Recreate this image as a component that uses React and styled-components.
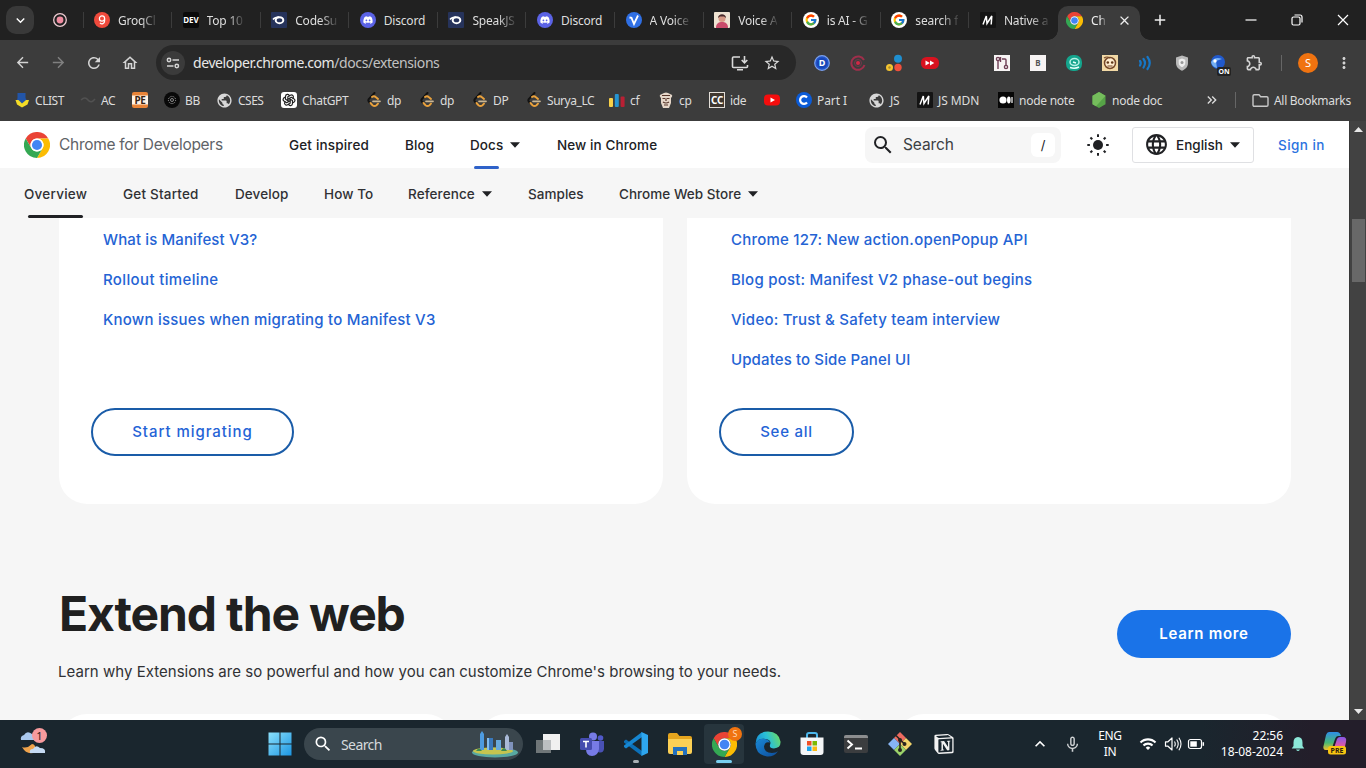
import React from "react";
import styled, { createGlobalStyle } from "styled-components";
import {
  MdArrowBack, MdArrowForward, MdRefresh, MdOutlineHome, MdStarBorder, MdMoreVert,
  MdOutlineExtension, MdSearch, MdLanguage, MdPublic, MdClose, MdAdd, MdKeyboardArrowDown,
  MdKeyboardArrowUp, MdKeyboardDoubleArrowRight, MdMicNone, MdWifi,
} from "react-icons/md";
import { SiDiscord, SiNotion } from "react-icons/si";
import { TbBrandOpenai } from "react-icons/tb";
import { FcGoogle } from "react-icons/fc";

const ui = `"Noto Sans", "Open Sans", sans-serif`;
const brand = `Inter, Roboto, sans-serif`;

const Global = createGlobalStyle`
  * { box-sizing: border-box; }
  body { margin: 0; overflow: hidden; background: #f6f6f6; }
  svg { display: block; flex: none; }
`;

/* ---------- shell ---------- */
const Screen = styled.div`
  width: 1366px; height: 768px; display: flex; flex-direction: column;
  overflow: hidden; font-family: ${ui};
`;

/* ---------- tab strip ---------- */
const TabStrip = styled.div`
  height: 40px; flex: none; display: flex; align-items: center; background: #212121; color: #dedede;
`;
const TabSearch = styled.div`
  width: 28px; height: 28px; margin: 0 9px 0 6px; border-radius: 10px; background: #393939;
  display: grid; place-items: center;
`;
const Tab = styled.div`
  position: relative; width: ${(p) => p.$w || 88.6}px; height: 40px; flex: none;
  display: flex; align-items: center; gap: 8px; padding-left: ${(p) => p.$pad || 10.5}px;
  &::after {
    content: ""; position: absolute; right: 0; top: 12px; width: 1px; height: 16px;
    background: ${(p) => (p.$last ? "transparent" : "#3c3c3c")};
  }
`;
const TabTitle = styled.span`
  white-space: nowrap; font-size: 12px; letter-spacing: -0.2px; line-height: 18px; padding-top: 1px;
  mask-image: ${(p) => (p.$full ? "none" : "linear-gradient(90deg, #000 60%, rgba(0,0,0,.15))")};
`;
const ActiveTab = styled.div`
  position: relative; width: 82px; height: 34px; margin-left: 0; align-self: flex-end; background: #3c3c3c;
  padding: 0 0 5px 8px; border-radius: 10px 10px 0 0; display: flex; align-items: center; color: #eee;
  &::before, &::after {
    content: ""; position: absolute; bottom: 0; width: 10px; height: 10px;
  }
  &::before { right: 100%; background: radial-gradient(circle at 0 0, transparent 9.5px, #3c3c3c 10px); }
  &::after { left: 100%; background: radial-gradient(circle at 100% 0, transparent 9.5px, #3c3c3c 10px); }
`;
const ActiveTitle = styled.div`
  width: 34px; padding-left: 8px; display: flex;
`;
const WindowButtons = styled.div`
  margin-left: auto; display: flex; align-items: center;
`;
const WindowButton = styled.div`
  width: 46px; height: 40px; display: grid; place-items: center; color: #fff;
`;

/* ---------- toolbar ---------- */
const Toolbar = styled.div`
  height: 45px; flex: none; display: flex; align-items: center; background: #3c3c3c;
  padding-left: 4px; color: #d4d4d4;
`;
const ToolCell = styled.div`
  position: relative; width: ${(p) => p.$w || 36}px; height: 36px; flex: none;
  display: grid; place-items: center; opacity: ${(p) => (p.$dim ? 0.45 : 1)};
`;
const UrlBar = styled.div`
  width: 640px; height: 35px; margin: 0 8px 0 8px; border-radius: 18px; background: #282828; flex: none;
  display: flex; align-items: center; padding-left: 5px; padding-right: 8px;
`;
const SiteInfo = styled.div`
  width: 24px; height: 24px; border-radius: 50%; background: #3b3b3b; display: grid; place-items: center;
`;
const Url = styled.div`
  flex: 1; margin-left: 8px; font-size: 14px; letter-spacing: -0.41px; color: #e8e8e8;
  span { color: #c2c2c2; }
`;
const UrlIcon = styled.div`
  width: 32px; display: grid; place-items: center;
`;
const Rule = styled.div`
  width: 1px; height: 16px; background: #666; flex: none;
`;
const Avatar = styled.div`
  width: 20px; height: 20px; border-radius: 50%; background: #f07310; color: #fff;
  font-size: 11px; display: grid; place-items: center;
`;
const OnBadge = styled.div`
  position: absolute; right: 5px; bottom: 5px; width: 14px; height: 9px; border-radius: 2px;
  background: #222; color: #fff; font-size: 7px; font-weight: 700; line-height: 9px; text-align: center;
`;

/* ---------- bookmarks ---------- */
const Bookmarks = styled.div`
  height: 36px; flex: none; display: flex; align-items: center; background: #3c3c3c;
  padding: 0 0 6px 14px; color: #dcdcdc;
`;
const Bookmark = styled.div`
  width: ${(p) => p.$w}px; flex: none; display: flex; align-items: center; gap: 5px;
  font-size: 12px; letter-spacing: ${(p) => (p.$ls === undefined ? -0.35 : p.$ls)}px; white-space: nowrap;
`;

/* ---------- page ---------- */
const Viewport = styled.div`
  flex: 1; display: flex; min-height: 0; background: #f6f6f6;
`;
const Page = styled.div`
  width: 1349px; display: flex; flex-direction: column; font-family: ${brand}; overflow: hidden;
`;
const Header = styled.header`
  height: 47px; flex: none; background: #fff; display: flex; align-items: center;
  padding-left: 24px; color: #202124;
`;
const Logo = styled.div`
  width: 265px; display: flex; align-items: center; gap: 9px; font-size: 15.5px;
  letter-spacing: -0.3px; color: #5f6368; white-space: nowrap;
`;
const NavItem = styled.div`
  position: relative; width: ${(p) => p.$w}px; height: 100%; flex: none;
  display: flex; align-items: center; gap: 7px; white-space: nowrap;
  font-size: 13.5px; font-weight: 450; letter-spacing: ${(p) => p.$ls || 0.1}px;
`;
const Underline = styled.div`
  position: absolute; left: 4px; bottom: ${(p) => p.$drop || 0}px; width: ${(p) => p.$w}px; height: 3px;
  border-radius: 3px; background: ${(p) => p.$color};
`;
const SearchBox = styled.div`
  width: 196px; height: 36px; margin-left: auto; background: #f6f6f6; border-radius: 8px;
  display: flex; align-items: center; padding: 0 6px; font-size: 15.5px; letter-spacing: -0.1px; color: #3c4043;
  span { flex: 1; margin-left: 8px; }
`;
const SlashKey = styled.div`
  width: 24px; height: 24px; border-radius: 6px; background: #fff; font-size: 13px; color: #202124;
  display: grid; place-items: center;
`;
const ThemeToggle = styled.div`
  width: 71px; padding-left: 3px; display: grid; place-items: center;
`;
const Language = styled.div`
  width: 122px; height: 36px; border: 1px solid #dfe0e3; border-radius: 3px; display: flex; align-items: center;
  padding-left: 11px; font-size: 13.5px; font-weight: 450; letter-spacing: 0; gap: 7px;
`;
const SignIn = styled.div`
  width: 95px; padding-left: 24px; font-size: 13.5px; font-weight: 500; letter-spacing: 0.45px; color: #2a72e0;
`;
const SubNav = styled.nav`
  height: 50px; flex: none; display: flex; align-items: center; padding: 1px 0 0 24px;
  background: #f6f6f6; color: #303134;
`;
const Cards = styled.div`
  height: 286px; flex: none; display: flex; gap: 24px; padding: 0 58px 0 59px;
`;
const Card = styled.section`
  flex: 1; background: #fff; border-radius: 0 0 28px 28px; padding: 2px 32px 0;
  display: flex; flex-direction: column; align-items: flex-start;
`;
const LinkList = styled.div`
  height: 188px; padding-left: 12px;
`;
const CardLink = styled.a`
  display: block; height: 40px; line-height: 40px; font-size: 15px; font-weight: 450;
  letter-spacing: ${(p) => p.$ls || 0.23}px; color: #2463d4; white-space: nowrap;
`;
const Outlined = styled.button`
  width: ${(p) => p.$w}px; height: 48px; border: 2px solid #1a5ca8; border-radius: 24px; background: #fff;
  color: #2463d6; font: 450 15px ${brand}; letter-spacing: ${(p) => p.$ls || 0.95}px; padding: 0 0 1px;
`;
const Intro = styled.section`
  height: 210px; flex: none; display: flex; align-items: flex-start; justify-content: space-between;
  padding: 82px 58px 0 58px; color: #202020;
`;
const Title = styled.h2`
  margin: 0; font-size: 48px; line-height: 56px; font-weight: 680; letter-spacing: -1.12px; padding-left: 1px;
`;
const Lead = styled.p`
  margin: 18px 0 0; font-size: 15px; line-height: 24px; letter-spacing: 0.03px; color: #303134; white-space: nowrap;
`;
const Filled = styled.button`
  width: 174px; height: 48px; margin-top: 24px; border: 0; border-radius: 24px; background: #1a73e8;
  color: #fff; font: 600 15px ${brand}; letter-spacing: 0.7px; padding: 0 0 1px;
`;
const NextCards = styled.div`
  flex: 1; display: flex; gap: 24px; padding: 0 58px 0 59px;
`;
const NextCard = styled.div`
  flex: 1; height: 60px; border-radius: 28px; background: #fff;
`;
const ScrollTrack = styled.div`
  width: 17px; background: #424242; display: flex; flex-direction: column; align-items: center;
  justify-content: space-between; padding: 6px 0 6px; border-left: 1px solid #383838;
`;
const ScrollThumb = styled.div`
  width: 13px; height: 63px; margin-bottom: 341px; background: #686868;
`;

/* ---------- taskbar ---------- */
const Taskbar = styled.div`
  height: 48px; flex: none; display: flex; align-items: center; color: #fff;
  background: linear-gradient(90deg, #1a262e 0, #1a262e 88%, #231e2a 96%, #231e2a 100%);
`;
const WeatherCell = styled.div`
  width: 257px; padding-left: 18px; padding-bottom: 5px;
`;
const TaskCell = styled.div`
  position: relative; width: ${(p) => p.$w || 44}px; height: 40px; flex: none; display: grid; place-items: center;
  ${(p) => p.$active && "&::before{content:'';position:absolute;inset:0 2px;border-radius:4px;background:#27353d;}"}
  svg { position: relative; }
`;
const RunMark = styled.div`
  position: absolute; left: 50%; bottom: 1px; width: ${(p) => p.$w}px; height: 3px; border-radius: 2px;
  transform: translateX(-50%); background: ${(p) => p.$color};
`;
const ProfileBadge = styled.div`
  position: absolute; right: 4px; top: 3px; width: 14px; height: 14px; border-radius: 50%;
  background: #f07310; color: #ffd9b5; font-size: 9px; line-height: 14px; text-align: center;
`;
const TaskSearch = styled.div`
  width: 219px; height: 32px; margin: 0 3px 0 2px; border-radius: 16px; background: #3a464d;
  display: flex; align-items: center; padding: 0 4px 0 9px; color: #d6dadd;
  font-size: 14px; letter-spacing: -0.6px;
  span { flex: 1; margin-left: 8px; }
`;
const Tray = styled.div`
  margin-left: auto; display: flex; align-items: center; height: 100%;
`;
const TwoLines = styled.div`
  width: ${(p) => p.$w}px; text-align: ${(p) => p.$align}; font-size: 12px; line-height: 16px;
  letter-spacing: ${(p) => p.$ls}px; white-space: nowrap;
`;
const Notice = styled.text`
  font: ${(p) => p.$size}px ${ui}; font-weight: ${(p) => p.$weight || 700}; text-anchor: middle;
`;

/* ---------- drawings ---------- */
const Svg = ({ s = 16, box = 16, children }) => (
  <svg width={s} height={s} viewBox={`0 0 ${box} ${box}`} fill="none">{children}</svg>
);
const ChromeLogo = ({ s = 16 }) => (
  <Svg s={s} box={48}>
    <path d="M24 12H44.8A24 24 0 0 0 3.2 12L13.6 30A12 12 0 0 1 24 12z" fill="#ea4335" />
    <path d="M44.8 12H24A12 12 0 0 1 34.4 30L24 48A24 24 0 0 0 44.8 12z" fill="#fbbc04" />
    <path d="M3.2 12A24 24 0 0 0 24 48L34.4 30A12 12 0 0 1 13.6 30z" fill="#34a853" />
    <circle cx="24" cy="24" r="12" fill="#fff" />
    <circle cx="24" cy="24" r="9.3" fill="#4285f4" />
  </Svg>
);
const Caret = () => <svg width="10" height="6" viewBox="0 0 10 6"><path d="M0 .3h10L5 5.8z" fill="#202124" /></svg>;
const Recorder = () => (
  <Svg><circle cx="8" cy="8" r="6.3" stroke="#eecbd2" strokeWidth="1.3" /><circle cx="8" cy="8" r="3.4" fill="#f08ca0" /></Svg>
);
const Groq = () => (
  <Svg><circle cx="8" cy="8" r="8" fill="#ef4a3c" /><circle cx="8" cy="6.5" r="2.6" stroke="#fff" strokeWidth="1.2" /><path d="M10.6 6.5v2.6a2.6 2.6 0 0 1-4.6 1.7" stroke="#fff" strokeWidth="1.2" /></Svg>
);
const Dev = () => (
  <Svg><rect width="16" height="16" rx="2" fill="#0a0a0a" /><Notice x="8" y="11.3" $size={8} fill="#fff">DEV</Notice></Svg>
);
const Loop = () => (
  <Svg><rect width="16" height="16" rx="1" fill="#26335b" /><path d="M2 7.500q2-2.500 6-2.500" stroke="#fff" strokeWidth="1.500" /><ellipse cx="8.500" cy="8.200" rx="3.800" ry="3" stroke="#fff" strokeWidth="2" /></Svg>
);
const DiscordIcon = () => (
  <Svg><circle cx="8" cy="8" r="8" fill="#5b63e6" /><SiDiscord x="3.2" y="3.2" size={9.6} color="#fff" /></Svg>
);
const VoiceV = () => (
  <Svg><circle cx="8" cy="8" r="8" fill="#2f6fe4" /><path d="M3.500 5.500l2 .3L8 12l4-8.500" stroke="#fff" strokeWidth="1.800" /></Svg>
);
const Portrait = () => (
  <Svg><rect width="16" height="16" rx="1" fill="#efe3d2" /><path d="M2 16c0-5 3-6 6-6s6 1 6 6z" fill="#c94b6a" /><circle cx="8" cy="6.500" r="3.500" fill="#d89a86" /><path d="M4 6c0-5 8-5 8 0l-2-1.500H6z" fill="#4a2a2a" /></Svg>
);
const GoogleTab = () => (
  <Svg><circle cx="8" cy="8" r="8" fill="#fff" /><FcGoogle x="1.500" y="1.500" size={13} /></Svg>
);
const Mdn = () => (
  <Svg><rect width="16" height="16" rx="1" fill="#141414" /><path d="M3 12.500L6.300 4l.7 7.500L11.800 4l-.6 8.500" stroke="#fff" strokeWidth="1.500" /></Svg>
);
const Tune = () => (
  <Svg s={14} box={14}><g stroke="#d5d5d5" strokeWidth="1.500"><circle cx="3" cy="4" r="1.700" /><path d="M6.500 4H13M1 10h6.500" /><circle cx="10.800" cy="10" r="1.700" /></g></Svg>
);
const Install = () => (
  <Svg s={18} box={18}><path d="M9 3H2.500Q1.500 3 1.500 4v8.500q0 1 1 1h13q1 0 1-1V11M6 15.800h6M13.500 2v6.500M10.700 6l2.800 2.800L16.300 6" stroke="#dadada" strokeWidth="1.600" /></Svg>
);
const DRing = () => (
  <Svg><circle cx="8" cy="8" r="7.300" fill="#2254c8" stroke="#7aa0ee" strokeWidth="1.200" /><circle cx="8" cy="8" r="5.200" fill="#1746b8" /><Notice x="8" y="11.200" $size={9} fill="#fff">D</Notice></Svg>
);
const RedRing = () => (
  <Svg><path d="M14 5A6.700 6.700 0 1 0 14.500 10" stroke="#9e2f4b" strokeWidth="2" /><circle cx="8" cy="8" r="3.500" stroke="#75364a" strokeWidth="1" /><circle cx="8" cy="8" r="2" fill="#d22846" /></Svg>
);
const Dots = () => (
  <Svg s={18} box={18}><circle cx="13" cy="4.800" r="4" fill="#1f8fd0" /><circle cx="4.500" cy="13.500" r="3.500" fill="#f4c430" /><circle cx="13" cy="13.500" r="3.700" fill="#f0503c" /><circle cx="4.500" cy="13.500" r="1.200" fill="#a8892c" /></Svg>
);
const RedSkip = () => (
  <Svg s={18} box={18}><rect y="3" width="18" height="12" rx="5.500" fill="#d8121f" /><path d="M4.500 6.500L8.800 9l-4.300 2.500zM9 6.500L13.300 9 9 11.500z" fill="#fff" /></Svg>
);
const WhiteTile = ({ children }) => <Svg><rect width="16" height="16" fill="#f7f4f4" />{children}</Svg>;
const PullTile = () => (
  <WhiteTile><g stroke="#6e3f55" strokeWidth="1.400"><circle cx="4" cy="4" r="1.600" /><circle cx="12" cy="12" r="1.600" /><path d="M4 6v8M8 4h3q1 0 1 1v5M6.500 2v5" /></g></WhiteTile>
);
const BTile = () => <WhiteTile><Notice x="8" y="11" $size={8} fill="#555">B</Notice></WhiteTile>;
const TealLens = () => (
  <Svg s={18} box={18}><rect x="1" y="1" width="16" height="16" rx="7" fill="#14a58d" /><ellipse cx="9.500" cy="8" rx="4.500" ry="3.500" stroke="#b5f1e5" strokeWidth="1.500" /><path d="M5 13.500q5 1.500 9-.500M8 8l3 1" stroke="#e6fffa" strokeWidth="1.500" /></Svg>
);
const Monkey = () => (
  <Svg><rect width="16" height="16" fill="#f2d9a6" /><circle cx="8" cy="8" r="5.500" fill="#ffedd0" stroke="#764829" strokeWidth="1.500" /><circle cx="5.800" cy="7.500" r="1.300" fill="#603718" /><circle cx="10.200" cy="7.500" r="1.300" fill="#603718" /><path d="M5.500 11h5M2 3q3-2 6 0" stroke="#764829" strokeWidth="1.200" /></Svg>
);
const Waves = () => (
  <Svg><path d="M2 6q1.500 2 0 4.500M5.500 4q3 4 0 8.500M9.500 2q4.500 6 0 12" stroke="#1677c8" strokeWidth="2.200" strokeLinecap="round" /></Svg>
);
const Shield = () => (
  <Svg><path d="M8 .5l6 2V8c0 4-3 6.500-6 7.800C5 14.500 2 12 2 8V2.500z" fill="#b9b9b9" /><path d="M8 3.500l3.300 1.200V8c0 2-1.500 3.500-3.300 4.300C6.200 11.500 4.700 10 4.700 8V4.700z" fill="#eee" /><circle cx="8" cy="7.500" r="1.500" fill="#999" /></Svg>
);
const BlueBall = () => (
  <Svg><circle cx="8" cy="7" r="7" fill="#2159cb" /><path d="M1 7q4-6 11-3L6 6l1 7Q2 12 1 7z" fill="#75b0f5" /><circle cx="5" cy="6" r="1.700" fill="#fff" /></Svg>
);
const Clist = () => (
  <Svg><path d="M3.500 1h8v5l1 2-4.500 4-5-4 .5-2z" fill="#2255a8" /><path d="M1.500 8l3 0 3.500 3.500L12 8l3 0-1.500 4.500L8 15.500l-5-3z" fill="#f4dc27" /></Svg>
);
const AcMark = () => <Svg><path d="M1 8q4-4 7 0t7-1" stroke="#515151" strokeWidth="1.500" /></Svg>;
const Pe = () => (
  <Svg><rect width="16" height="16" rx="2" fill="#e98438" /><rect x="0" y="3.500" width="16" height="9" fill="#fff3e6" /><Notice x="8" y="11.500" $size={10} fill="#3a2415">PE</Notice></Svg>
);
const Bb = () => (
  <Svg><circle cx="8" cy="8" r="8" fill="#090909" /><circle cx="8" cy="8" r="3.600" stroke="#aaa" strokeDasharray="1 1" /><circle cx="8" cy="8" r="1.500" stroke="#aaa" strokeWidth=".8" /></Svg>
);
const World = () => <MdPublic size={17} color="#d8d8d8" />;
const Gpt = () => <Svg><rect width="16" height="16" rx="3" fill="#fff" /><TbBrandOpenai x="1" y="1" size={14} color="#222" /></Svg>;
const Leet = () => (
  <Svg>
    <path d="M8.500 1L3 6.800q-1.300 1.500 0 3l1.200 1.200" stroke="#121212" strokeWidth="2" strokeLinecap="round" />
    <path d="M6 5q2-1.500 4 .3L12 7M4.500 11l2 2.200q2 1.600 4 0L12 11.600" stroke="#e9a13c" strokeWidth="1.900" strokeLinecap="round" />
    <path d="M7 9.300h7" stroke="#c9b694" strokeWidth="1.700" strokeLinecap="round" />
  </Svg>
);
const Cf = () => (
  <Svg><rect x="0" y="6" width="4" height="9" rx="1" fill="#f8d148" /><rect x="5.800" y="2" width="4" height="13" rx="1" fill="#2595d2" /><rect x="11.600" y="4.500" width="4" height="10.500" rx="1" fill="#b92034" /></Svg>
);
const Chef = () => (
  <Svg><path d="M3 6Q0 3 4 2q4-3 8 0 4 1 1 4v5l-2 5H5l-2-5z" fill="#e5d6c8" /><path d="M4.500 6.500h3M8.500 6.500h3M5 10q3 2 6 0M8 7v2M6 13h4M4 3.500h8" stroke="#57362a" strokeWidth="1.200" /></Svg>
);
const Cc = () => (
  <Svg><rect x=".5" y=".5" width="15" height="15" fill="#40372f" stroke="#e3ded8" /><Notice x="8" y="11.500" $size={10} fill="#fff">CC</Notice></Svg>
);
const Youtube = () => <Svg><rect y="2.500" width="16" height="11" rx="4" fill="#f50d0d" /><path d="M6.500 5.500L11 8l-4.500 2.500z" fill="#fff" /></Svg>;
const BlueC = () => <Svg><circle cx="8" cy="8" r="8" fill="#0b5bd7" /><path d="M11 5.500A3.900 3.900 0 1 0 11 10.500" stroke="#fff" strokeWidth="2.200" /></Svg>;
const Medium = () => <Svg><rect width="16" height="16" fill="#070707" /><circle cx="5" cy="8" r="3.600" fill="#fff" /><ellipse cx="10.800" cy="8" rx="1.800" ry="3.400" fill="#fff" /><path d="M14 5v6" stroke="#fff" strokeWidth="1.200" /></Svg>;
const NodeHex = () => <Svg><path d="M8 0l6.500 3.800v8.400L8 16l-6.500-3.800V3.800z" fill="#56a347" /><path d="M8 0l6.500 3.800L5 14.200 1.500 12.200V3.800z" fill="#75bd5c" /></Svg>;
const SunIcon = () => (
  <Svg s={24} box={24}>
    <circle cx="12" cy="12" r="5" fill="#202124" />
    {[0, 45, 90, 135, 180, 225, 270, 315].map((a) => (
      <path key={a} d="M12 1.300v2.600" stroke="#202124" strokeWidth="2" transform={`rotate(${a} 12 12)`} />
    ))}
  </Svg>
);
const Weather = () => (
  <Svg s={30} box={30}>
    <path d="M3 13q-1-4 3-5 3-5 8-1 6 0 5 6z" fill="#a9c8ee" />
    <path d="M4 20q5 2 10-3 4 0 4 8-9 4-14-5z" fill="#efa34c" />
    <path d="M12 26q-1-4 3-4 3-5 7-1 6 0 5 5z" fill="#c5daf3" />
    <circle cx="21.500" cy="8.500" r="7.500" fill="#f79a9d" />
    <Notice x="21.500" y="12.500" $size={11} $weight={400} fill="#331a1a">1</Notice>
  </Svg>
);
const Windows = () => (
  <Svg s={24} box={24}>
    <defs><linearGradient id="win" x1="0" y1="0" x2="1" y2="1"><stop stopColor="#8ce0fb" /><stop offset="1" stopColor="#1c96e2" /></linearGradient></defs>
    <path d="M.5.5h11v11H.5zM12.500.5h11v11h-11zM.5 12.500h11v11H.5zM12.500 12.500h11v11h-11z" fill="url(#win)" />
  </Svg>
);
const City = () => (
  <svg width="48" height="28" viewBox="0 0 48 28">
    <ellipse cx="24" cy="22.500" rx="23" ry="5" fill="#58a8a1" /><ellipse cx="22" cy="21" rx="20" ry="3.500" fill="#c5c44f" />
    <path d="M9 20V4l2-3 2 3v16z" fill="#4d9be0" /><path d="M16 20V8h6v12z" fill="#82bdf0" /><path d="M18 8h4v12h-4z" fill="#3978bb" />
    <path d="M25 20V10h5v10z" fill="#67a9dc" /><path d="M34 20V7l2-3 2 3v13z" fill="#a9b9d6" /><path d="M38 20v-8h4v8z" fill="#7f92bb" />
    <path d="M5 21q3-5 6 0zM30 21q3-6 6 0z" fill="#3d8a51" />
  </svg>
);
const TaskView = () => <Svg s={26} box={26}><rect x="1" y="9" width="15" height="13" fill="#6f7678" /><rect x="8" y="3" width="17" height="16" fill="#f0f0f0" /><path d="M8 9h8v10H8z" fill="#bcbfc1" /></Svg>;
const Teams = () => (
  <Svg s={26} box={26}><circle cx="14" cy="5.500" r="4" fill="#777be6" /><circle cx="21.500" cy="7" r="2.800" fill="#5059c9" /><path d="M17 10h8v8q-1 5-6 3z" fill="#4951b5" /><path d="M7 10h13v8q-1 7-7 7t-6-7z" fill="#777be6" /><rect x="1" y="7" width="12" height="12" rx="1.500" fill="#454cae" /><path d="M4 10.500h6M7 10.500v6" stroke="#fff" strokeWidth="1.600" /></Svg>
);
const VsCode = () => (
  <Svg s={24} box={24}>
    <path d="M0 9l2-1.500L18 19v5L0 10.500z" fill="#0c70b8" />
    <path d="M0 15l2 1.500L18 5V0L0 13.500z" fill="#1686d1" />
    <path d="M17.500 0L24 3v18l-6.500 3z" fill="#2ea6ee" />
  </Svg>
);
const Explorer = () => (
  <Svg s={26} box={26}><path d="M1 4q0-2 2-2h7l2.500 3H23q2 0 2 2v3H1z" fill="#e5a51e" /><path d="M1 8h24v13q0 2-2 2H3q-2 0-2-2z" fill="#fbd055" /><path d="M6 16h14v8H6z" fill="#2471bd" /><path d="M10 20h6v4h-6z" fill="#fbd055" /></Svg>
);
const Edge = () => (
  <Svg s={26} box={26}>
    <defs>
      <linearGradient id="edge" x1="0" y1=".6" x2="1" y2=".3"><stop stopColor="#168fd8" /><stop offset=".5" stopColor="#2bc0d6" /><stop offset="1" stopColor="#6bdc62" /></linearGradient>
      <linearGradient id="edgeLow" x1="0" y1="0" x2="1" y2="1"><stop stopColor="#1988d6" /><stop offset="1" stopColor="#0d4c9b" /></linearGradient>
    </defs>
    <path d="M.5 13Q1 .5 13 .5q11 .5 12.500 10 .5 6.500-6.500 7-5 0-4-3.500Q17 9 10.500 8 3 7 .5 13z" fill="url(#edge)" />
    <path d="M.5 13Q3 7 10 8q4 .5 5 3.500-5-1.500-6 4 0 6 8 6.500 4-.3 6-1.800Q19 26 12 25.500 1 24 .5 13z" fill="url(#edgeLow)" />
  </Svg>
);
const Store = () => (
  <Svg s={26} box={26}><path d="M8 7V4q0-2 2-2h6q2 0 2 2v3" stroke="#4cb7ec" strokeWidth="2" /><path d="M1.500 6.500h23V21q0 3-3 3h-17q-3 0-3-3z" fill="#f4f6f8" /><path d="M8 10h4.500v4.500H8z" fill="#ef5026" /><path d="M13.500 10H18v4.500h-4.500z" fill="#7cb902" /><path d="M8 15.500h4.500V20H8z" fill="#1ba4ec" /><path d="M13.500 15.500H18V20h-4.500z" fill="#fbba11" /></Svg>
);
const Terminal = () => <Svg s={26} box={26}><rect x="1" y="4" width="24" height="18" rx="2" fill="#3b3d3f" /><path d="M1 6q0-2 2-2h20q2 0 2 2v1H1z" fill="#8b8d8f" /><path d="M4.500 9.500l4.500 4-4.500 4M12 17.500h7" stroke="#fff" strokeWidth="1.900" /></Svg>;
const Git = () => (
  <Svg s={26} box={26}><path d="M13 1l6 6-6 6-6-6z" fill="#ed6a5f" /><path d="M7 7l6 6-6 6-6-6z" fill="#87b5f4" /><path d="M19 7l6 6-6 6-6-6z" fill="#f2d36b" /><path d="M13 13l6 6-6 6-6-6z" fill="#9cd36a" /><path d="M9 4.500l8 8M13 8.500V19" stroke="#29241f" strokeWidth="1.600" /><g fill="#29241f"><circle cx="13" cy="9" r="2" /><circle cx="17.500" cy="13" r="2" /><circle cx="13" cy="19" r="2" /></g></Svg>
);
const Notion = () => <SiNotion size={20} color="#f2f2f2" />;
const Speaker = () => <Svg s={18} box={18}><path d="M1.500 6.800H4L8 3v12l-4-3.800H1.500z" stroke="#fff" strokeWidth="1.200" strokeLinejoin="round" /><path d="M10.500 6.500q1.500 2.500 0 5M12.700 4.500q3 4.500 0 9M14.900 2.800q4.200 6.200 0 12.400" stroke="#fff" strokeWidth="1.100" /></Svg>;
const Battery = () => <Svg s={18} box={18}><rect x="1.500" y="4.500" width="13" height="9" rx="2" stroke="#fff" strokeWidth="1.200" /><rect x="3.300" y="6.300" width="6.500" height="5.400" fill="#fff" /><path d="M16.300 7.200v3.600" stroke="#fff" strokeWidth="1.500" /></Svg>;
const Bell = () => <Svg><path d="M8 1q4.500.4 4.500 5.500V10l1.800 2.500H1.700L3.500 10V6.500Q3.500 1.400 8 1z" fill="#8ce8d8" /><path d="M6 13.500q2 3 4 0z" fill="#8ce8d8" /></Svg>;
const Copilot = () => (
  <Svg s={28} box={28}>
    <defs>
      <linearGradient id="cpA" x1="0" y1="0" x2="0" y2="1"><stop stopColor="#2e8ee8" /><stop offset=".6" stopColor="#48b873" /><stop offset="1" stopColor="#f3c12c" /></linearGradient>
      <linearGradient id="cpB" x1="0" y1="0" x2="0" y2="1"><stop stopColor="#8557e8" /><stop offset=".6" stopColor="#ed5a9b" /><stop offset="1" stopColor="#f19b42" /></linearGradient>
    </defs>
    <path d="M8 2h8q3 0 4 4h-3q-2 0-3 3l-3 9q-1 2-3 2H5Q1 20 3 14L5 5q1-3 3-3z" fill="url(#cpA)" />
    <path d="M20 24h-8q-3 0-3-3 3 0 4-3l3-9q1-2 3-2h3q4 0 3 5l-2 9q-1 3-3 3z" fill="url(#cpB)" />
    <rect x="7" y="16" width="18" height="8.500" rx="2.500" fill="#f8c511" /><Notice x="16" y="22.800" $size={7} fill="#2c210b">PRE</Notice>
  </Svg>
);

/* ---------- data ---------- */
const tabs = [
  [Groq, "GroqCl"], [Dev, "Top 10"], [Loop, "CodeSu"], [DiscordIcon, "Discord", true],
  [Loop, "SpeakJS"], [DiscordIcon, "Discord", true], [VoiceV, "A Voice"], [Portrait, "Voice A"],
  [GoogleTab, "is AI - G"], [GoogleTab, "search f"], [Mdn, "Native a"],
];
const extensions = [DRing, RedRing, Dots, RedSkip, null, PullTile, BTile, TealLens, Monkey, Waves, Shield];
const bookmarks = [
  [Clist, "CLIST", 66, -0.45], [AcMark, "AC", 52], [Pe, "", 32], [Bb, "BB", 52], [World, "CSES", 65, -0.5], [Gpt, "ChatGPT", 85],
  [Leet, "dp", 53], [Leet, "dp", 53], [Leet, "DP", 54], [Leet, "Surya_LC", 83, -0.45], [Cf, "cf", 49], [Chef, "cp", 51],
  [Cc, "ide", 55], [Youtube, "", 32], [BlueC, "Part I", 72, -0.1], [World, "JS", 49], [Mdn, "JS MDN", 81, -0.1],
  [Medium, "node note", 93, -0.25], [NodeHex, "node doc", 113, -0.25],
];
const apps = [TaskView, Teams, VsCode, Explorer, ChromeLogo, Edge, Store, Terminal, Git, Notion];

export default function App() {
  return (
    <Screen>
      <Global />
      <TabStrip>
        <TabSearch><MdKeyboardArrowDown size={17} color="#fff" /></TabSearch>
        <Tab $w={40.5} $pad={9}><Recorder /></Tab>
        {tabs.map(([Icon, title, full], i) => (
          <Tab key={i} $last={i === tabs.length - 1}><Icon /><TabTitle $full={full}>{title}</TabTitle></Tab>
        ))}
        <ActiveTab><ChromeLogo s={17} /><ActiveTitle><TabTitle>Ch</TabTitle></ActiveTitle><MdClose size={15} /></ActiveTab>
        <ToolCell $w={40}><MdAdd size={18} color="#eee" /></ToolCell>
        <WindowButtons>
          <WindowButton><Svg s={12} box={12}><path d="M.5 6h11" stroke="#fff" strokeWidth="1.200" /></Svg></WindowButton>
          <WindowButton><Svg s={12} box={12}><rect x="1" y="3" width="8" height="8" rx="1.500" stroke="#fff" strokeWidth="1.200" /><path d="M3.500 1h5.500q2 0 2 2v5.500" stroke="#fff" strokeWidth="1.200" /></Svg></WindowButton>
          <WindowButton><Svg s={12} box={12}><path d="M1 1l10 10M11 1L1 11" stroke="#fff" strokeWidth="1.200" /></Svg></WindowButton>
        </WindowButtons>
      </TabStrip>

      <Toolbar>
        <ToolCell><MdArrowBack size={17} /></ToolCell>
        <ToolCell $dim><MdArrowForward size={17} /></ToolCell>
        <ToolCell><MdRefresh size={18} /></ToolCell>
        <ToolCell><MdOutlineHome size={18} /></ToolCell>
        <UrlBar>
          <SiteInfo><Tune /></SiteInfo>
          <Url>developer.chrome.com<span>/docs/extensions</span></Url>
          <UrlIcon><Install /></UrlIcon>
          <UrlIcon><MdStarBorder size={18} color="#dadada" /></UrlIcon>
        </UrlBar>
        {extensions.map((Icon, i) => <ToolCell key={i}>{Icon && <Icon />}</ToolCell>)}
        <ToolCell><BlueBall /><OnBadge>ON</OnBadge></ToolCell>
        <ToolCell><MdOutlineExtension size={19} /></ToolCell>
        <ToolCell $w={18}><Rule /></ToolCell>
        <ToolCell><Avatar>S</Avatar></ToolCell>
        <ToolCell><MdMoreVert size={18} /></ToolCell>
      </Toolbar>

      <Bookmarks>
        {bookmarks.map(([Icon, label, w, ls], i) => <Bookmark key={i} $w={w} $ls={ls}><Icon />{label}</Bookmark>)}
        <Bookmark $w={31}><MdKeyboardDoubleArrowRight size={16} /></Bookmark>
        <Bookmark $w={17}><Rule /></Bookmark>
        <Bookmark $w={110} $ls={-0.3}>
          <Svg s={17} box={17}><path d="M1 4q0-1.300 1.300-1.300H7l1.700 2h6q1.300 0 1.300 1.300v7q0 1.300-1.300 1.300H2.300Q1 14.300 1 13z" stroke="#c8c8c8" strokeWidth="1.400" /></Svg>
          All Bookmarks
        </Bookmark>
      </Bookmarks>

      <Viewport>
        <Page>
          <Header>
            <Logo><ChromeLogo s={26} />Chrome for Developers</Logo>
            <NavItem $w={116} $ls={0.17}>Get inspired</NavItem>
            <NavItem $w={65}>Blog</NavItem>
            <NavItem $w={87}>Docs<Caret /><Underline $w={25} $drop={-1} $color="#2f62c9" /></NavItem>
            <NavItem $w={120}>New in Chrome</NavItem>
            <SearchBox><MdSearch size={24} color="#202124" /><span>Search</span><SlashKey>/</SlashKey></SearchBox>
            <ThemeToggle><SunIcon /></ThemeToggle>
            <Language><MdLanguage size={25} />English<Caret /></Language>
            <SignIn>Sign in</SignIn>
          </Header>
          <SubNav>
            <NavItem $w={99} $ls={0.25}>Overview<Underline $w={55} $color="#202124" /></NavItem>
            <NavItem $w={112} $ls={0.2}>Get Started</NavItem>
            <NavItem $w={89}>Develop</NavItem>
            <NavItem $w={84}>How To</NavItem>
            <NavItem $w={120}>Reference<Caret /></NavItem>
            <NavItem $w={91} $ls={0.05}>Samples</NavItem>
            <NavItem $w={150} $ls={0.04}>Chrome Web Store<Caret /></NavItem>
          </SubNav>
          <Cards>
            <Card>
              <LinkList>
                <CardLink $ls={0.12}>What is Manifest V3?</CardLink>
                <CardLink $ls={0.36}>Rollout timeline</CardLink>
                <CardLink>Known issues when migrating to Manifest V3</CardLink>
              </LinkList>
              <Outlined $w={203}>Start migrating</Outlined>
            </Card>
            <Card>
              <LinkList>
                <CardLink>Chrome 127: New action.openPopup API</CardLink>
                <CardLink>Blog post: Manifest V2 phase-out begins</CardLink>
                <CardLink>Video: Trust &amp; Safety team interview</CardLink>
                <CardLink $ls={0.12}>Updates to Side Panel UI</CardLink>
              </LinkList>
              <Outlined $w={135} $ls={0.75}>See all</Outlined>
            </Card>
          </Cards>
          <Intro>
            <div>
              <Title>Extend the web</Title>
              <Lead>Learn why Extensions are so powerful and how you can customize Chrome's browsing to your needs.</Lead>
            </div>
            <Filled>Learn more</Filled>
          </Intro>
          <NextCards><NextCard /><NextCard /><NextCard /></NextCards>
        </Page>
        <ScrollTrack>
          <svg width="9" height="6" viewBox="0 0 9 6"><path d="M4.500 0L9 5H0z" fill="#e8e8e8" /></svg>
          <ScrollThumb />
          <svg width="9" height="6" viewBox="0 0 9 6"><path d="M4.500 6L9 1H0z" fill="#e8e8e8" /></svg>
        </ScrollTrack>
      </Viewport>

      <Taskbar>
        <WeatherCell><Weather /></WeatherCell>
        <TaskCell $w={45}><Windows /></TaskCell>
        <TaskSearch><MdSearch size={20} color="#fff" /><span>Search</span><City /></TaskSearch>
        {apps.map((Icon, i) => (
          <TaskCell key={i} $active={i === 4}>
            <Icon s={25} />
            {i === 2 && <RunMark $w={6} $color="#a9b0b4" />}
            {i === 4 && <RunMark $w={16} $color="#79cff0" />}
            {i === 4 && <ProfileBadge>S</ProfileBadge>}
          </TaskCell>
        ))}
        <Tray>
          <TaskCell $w={32}><MdKeyboardArrowUp size={20} /></TaskCell>
          <TaskCell $w={32}><MdMicNone size={19} color="#d0d3d5" /></TaskCell>
          <TwoLines $w={44} $align="center" $ls={-0.35}>ENG<br />IN</TwoLines>
          <TaskCell $w={32}><MdWifi size={18} /></TaskCell>
          <TaskCell $w={17}><Speaker /></TaskCell>
          <TaskCell $w={29}><Battery /></TaskCell>
          <TwoLines $w={73} $align="right" $ls={-0.05}>22:56<br />18-08-2024</TwoLines>
          <TaskCell $w={30}><Bell /></TaskCell>
          <TaskCell $w={43}><Copilot /></TaskCell>
          <TaskCell $w={10} />
        </Tray>
      </Taskbar>
    </Screen>
  );
}
